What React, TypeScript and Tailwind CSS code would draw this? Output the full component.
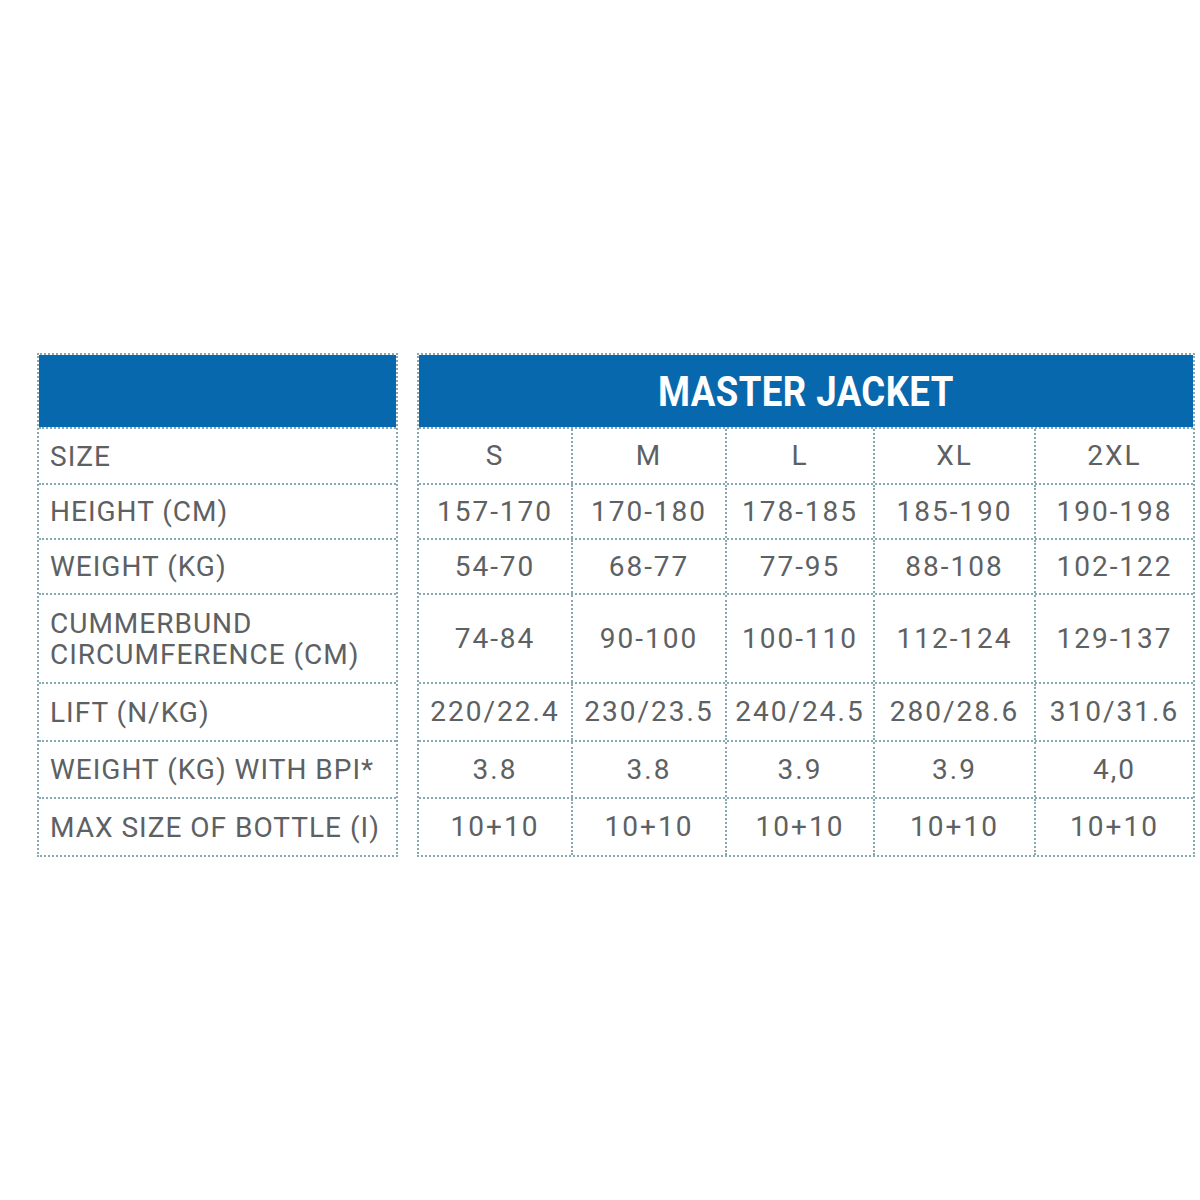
const rows = [
  { label: ['SIZE'], h: 'h-[56px]', vals: ['S', 'M', 'L', 'XL', '2XL'] },
  { label: ['HEIGHT (CM)'], h: 'h-[55px]', vals: ['157-170', '170-180', '178-185', '185-190', '190-198'] },
  { label: ['WEIGHT (KG)'], h: 'h-[55px]', vals: ['54-70', '68-77', '77-95', '88-108', '102-122'] },
  { label: ['CUMMERBUND', 'CIRCUMFERENCE (CM)'], h: 'h-[89px]', vals: ['74-84', '90-100', '100-110', '112-124', '129-137'] },
  { label: ['LIFT (N/KG)'], h: 'h-[58px]', vals: ['220/22.4', '230/23.5', '240/24.5', '280/28.6', '310/31.6'] },
  { label: ['WEIGHT (KG) WITH BPI*'], h: 'h-[57px]', vals: ['3.8', '3.8', '3.9', '3.9', '4,0'] },
  { label: ['MAX SIZE OF BOTTLE (I)'], h: 'h-[58px]', vals: ['10+10', '10+10', '10+10', '10+10', '10+10'] },
];

// widths include the 2px dotted divider on the left of columns 2-5
const colWidths = ['w-[152px]', 'w-[154px]', 'w-[148px]', 'w-[161px]', 'w-[159px]'];

const dot = 'border-dotted border-[#86aab4]';

export default function App() {
  return (
    <div
      className="w-[1200px] h-[1200px] bg-white pt-[353px] pl-[37px] flex items-start gap-[19px] text-[#5d6163]"
      style={{ fontFamily: 'Roboto, "Liberation Sans", sans-serif' }}
    >
      {/* Labels */}
      <div className={`w-[361px] border-2 ${dot}`}>
        <div className="h-[72px] bg-[#0868ad]" />
        {rows.map((r, i) => (
          <div
            key={i}
            className={`${r.h} border-t-2 ${dot} flex flex-col justify-center pl-[11px] text-[28px] leading-[31px] tracking-[1px]`}
          >
            {r.label.map((l) => (
              <span key={l}>{l}</span>
            ))}
          </div>
        ))}
      </div>

      {/* Sizes */}
      <div className={`w-[778px] border-2 ${dot}`}>
        <div className="h-[72px] bg-[#0868ad] flex items-center justify-center">
          <span className="text-white font-bold text-[42px] leading-none scale-x-[0.87] tracking-[0.5px] pt-[2px]">
            MASTER JACKET
          </span>
        </div>
        {rows.map((r, i) => (
          <div key={i} className={`${r.h} border-t-2 ${dot} flex`}>
            {r.vals.map((v, j) => (
              <div
                key={j}
                className={`${colWidths[j]} ${j > 0 ? `border-l-2 ${dot}` : ''} shrink-0 flex items-center justify-center text-[28px] tracking-[2px]`}
              >
                {v}
              </div>
            ))}
          </div>
        ))}
      </div>
    </div>
  );
}
